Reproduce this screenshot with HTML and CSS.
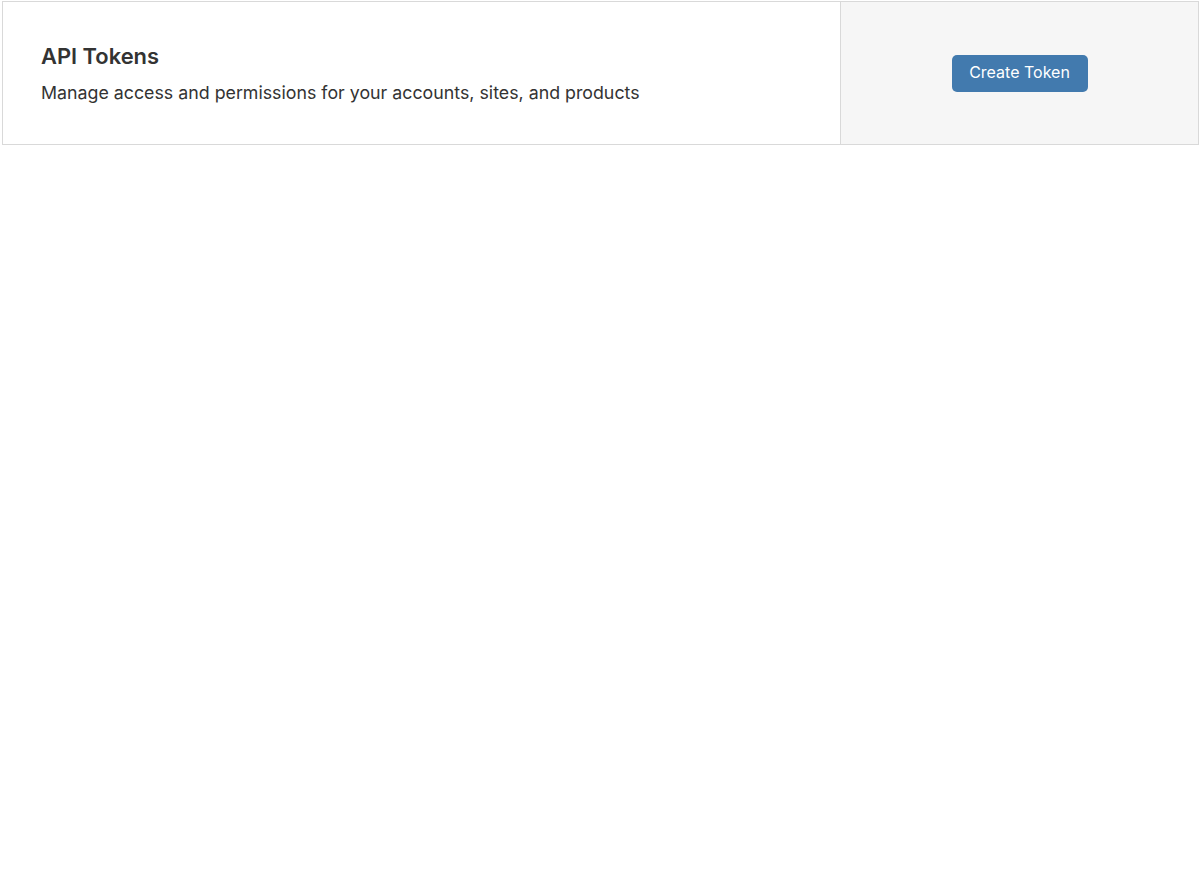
FILE: index.html
```html
<!DOCTYPE html>
<html lang="en">
<head>
<meta charset="utf-8">
<title>API Tokens</title>
<link rel="stylesheet" href="styles.css">
</head>
<body>
<div class="page">
  <section class="card">
    <div class="card-main">
      <h1 class="card-title">API Tokens</h1>
      <p class="card-desc">Manage access and permissions for your accounts, sites, and products</p>
    </div>
    <div class="card-side">
      <button class="btn-primary" type="button">Create Token</button>
    </div>
  </section>
</div>
</body>
</html>
```

FILE: styles.css
```css
html, body {
  margin: 0;
  padding: 0;
  background: #fff;
}
body {
  font-family: Inter, "Noto Sans", "Liberation Sans", sans-serif;
  color: #333;
}
.page {
  padding: 1px 1px 0 2px;
}
.card {
  display: flex;
  border: 1px solid #d9d9d9;
  box-sizing: border-box;
  height: 144px;
}
.card-main {
  flex: 0 0 838px;
  padding: 0 38px;
  display: flex;
  flex-direction: column;
  justify-content: center;
  box-sizing: border-box;
  border-right: 1px solid #d9d9d9;
}
.card-title {
  margin: 0 0 9px;
  font-size: 21.9px;
  font-weight: 600;
  line-height: 30px;
  color: #333;
}
.card-desc {
  margin: 0;
  font-size: 17.8px;
  line-height: 26px;
  color: #333;
}
.card-side {
  flex: 1;
  background: #f6f6f6;
  display: flex;
  align-items: center;
  justify-content: center;
}
.btn-primary {
  font-family: inherit;
  font-size: 16px;
  line-height: 20px;
  color: #fff;
  background: #427aae;
  border: 0;
  border-radius: 5px;
  width: 136px;
  height: 37px;
  padding: 0 0 2px;
}
```
